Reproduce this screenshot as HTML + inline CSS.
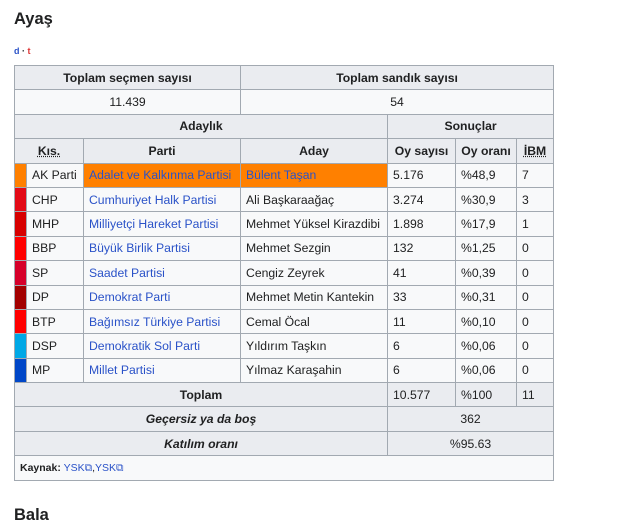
<!DOCTYPE html>
<html><head><meta charset="utf-8"><style>
body{margin:0;background:#fff;font-family:"Liberation Sans",sans-serif;color:#202122;width:620px;height:515px;overflow:hidden;position:relative}
h3{position:absolute;left:14px;top:10px;margin:0;font-size:16.5px;font-weight:bold}
.dt{position:absolute;left:14px;top:46px;font-size:9px;font-weight:bold}
table{position:absolute;left:14px;top:65px;border-collapse:collapse;font-size:12.2px;width:539px;table-layout:fixed}
td,th{border:1px solid #a2a9b1;padding:0 5px;height:23.4px;line-height:14px;background:#f8f9fa;white-space:nowrap;overflow:hidden}
th{background:#eaecf0;font-weight:bold;text-align:center}
a{color:#2a52c8;text-decoration:none}
.c{padding:0}
.o{background:#ff8000}
.u{text-decoration:underline dotted}
.g td{background:#eaecf0}
.bala{position:absolute;left:14px;top:506px;margin:0;font-size:16.5px;font-weight:bold}
</style></head><body>
<h3>Ayaş</h3>
<div class="dt"><a>d</a> · <span style="color:#d33">t</span></div>
<table>
<colgroup><col style="width:12px"><col style="width:57px"><col style="width:157px"><col style="width:147px"><col style="width:68px"><col style="width:61px"><col style="width:37px"></colgroup>
<tr><th colspan="3">Toplam seçmen sayısı</th><th colspan="4">Toplam sandık sayısı</th></tr>
<tr><td colspan="3" style="text-align:center">11.439</td><td colspan="4" style="text-align:center">54</td></tr>
<tr><th colspan="4">Adaylık</th><th colspan="3">Sonuçlar</th></tr>
<tr><th colspan="2"><span class="u">Kıs.</span></th><th>Parti</th><th>Aday</th><th>Oy sayısı</th><th>Oy oranı</th><th><span class="u">İBM</span></th></tr>
<tr><td class="c" style="background:#ff8000"></td><td>AK Parti</td><td class="o"><a>Adalet ve Kalkınma Partisi</a></td><td class="o"><a>Bülent Taşan</a></td><td>5.176</td><td>%48,9</td><td>7</td></tr>
<tr><td class="c" style="background:#e30a17"></td><td>CHP</td><td><a>Cumhuriyet Halk Partisi</a></td><td>Ali Başkaraağaç</td><td>3.274</td><td>%30,9</td><td>3</td></tr>
<tr><td class="c" style="background:#d70000"></td><td>MHP</td><td><a>Milliyetçi Hareket Partisi</a></td><td>Mehmet Yüksel Kirazdibi</td><td>1.898</td><td>%17,9</td><td>1</td></tr>
<tr><td class="c" style="background:#ff0000"></td><td>BBP</td><td><a>Büyük Birlik Partisi</a></td><td>Mehmet Sezgin</td><td>132</td><td>%1,25</td><td>0</td></tr>
<tr><td class="c" style="background:#d6002a"></td><td>SP</td><td><a>Saadet Partisi</a></td><td>Cengiz Zeyrek</td><td>41</td><td>%0,39</td><td>0</td></tr>
<tr><td class="c" style="background:#a30000"></td><td>DP</td><td><a>Demokrat Parti</a></td><td>Mehmet Metin Kantekin</td><td>33</td><td>%0,31</td><td>0</td></tr>
<tr><td class="c" style="background:#ff0000"></td><td>BTP</td><td><a>Bağımsız Türkiye Partisi</a></td><td>Cemal Öcal</td><td>11</td><td>%0,10</td><td>0</td></tr>
<tr><td class="c" style="background:#00a8e6"></td><td>DSP</td><td><a>Demokratik Sol Parti</a></td><td>Yıldırım Taşkın</td><td>6</td><td>%0,06</td><td>0</td></tr>
<tr><td class="c" style="background:#0047c8"></td><td>MP</td><td><a>Millet Partisi</a></td><td>Yılmaz Karaşahin</td><td>6</td><td>%0,06</td><td>0</td></tr>
<tr class="g"><th colspan="4">Toplam</th><td>10.577</td><td>%100</td><td>11</td></tr>
<tr class="g"><th colspan="4"><i>Geçersiz ya da boş</i></th><td colspan="3" style="text-align:center">362</td></tr>
<tr class="g"><th colspan="4"><i>Katılım oranı</i></th><td colspan="3" style="text-align:center">%95.63</td></tr>
<tr><td colspan="7" style="font-size:10.5px"><b>Kaynak:</b> <a>YSK⧉</a>,<a>YSK⧉</a></td></tr>
</table>
<div class="bala">Bala</div>
</body></html>
